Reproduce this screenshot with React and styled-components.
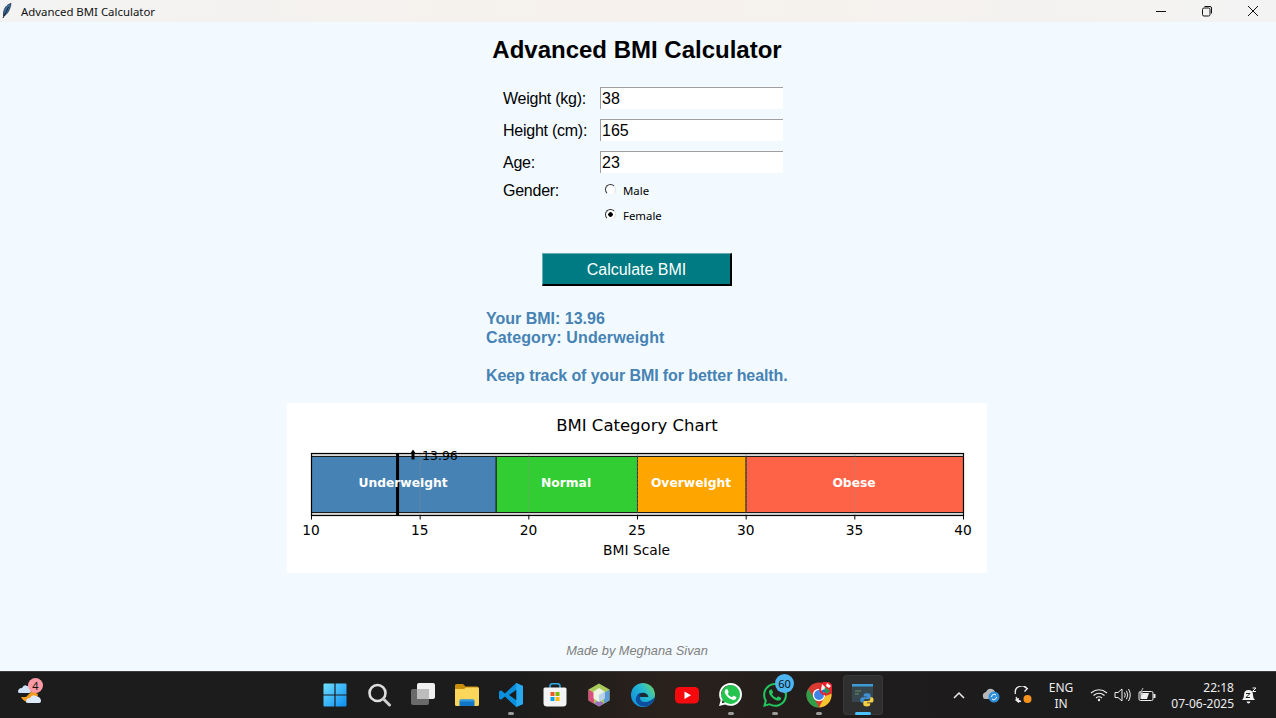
import React from "react"
import styled, { createGlobalStyle } from "styled-components"
import { SiWhatsapp } from "react-icons/si"

const GlobalStyle = createGlobalStyle`
  html, body {
    margin: 0;
    padding: 0;
    overflow: hidden;
    background: #f2faff;
  }
`

const Screen = styled.div`
  width: 1276px;
  height: 718px;
  display: flex;
  flex-direction: column;
  overflow: hidden;
  font-family: "Liberation Sans", Arial, sans-serif;
`

// Title bar

const TitleBar = styled.div`
  height: 22px;
  flex: none;
  display: flex;
  align-items: center;
  padding-left: 2px;
  background: linear-gradient(90deg, #f3f3f3, #f6f1ec 50%, #f3f3f3);
`

const WindowTitle = styled.span`
  margin-left: 9px;
  font: 11.4px "Noto Sans", sans-serif;
  color: #111;
`

const WindowControls = styled.div`
  margin-left: auto;
  display: flex;
  height: 100%;
`

const ControlButton = styled.div`
  width: 46px;
  display: flex;
  align-items: center;
  justify-content: center;
`

// App body

const Main = styled.main`
  flex: 1;
  display: flex;
  flex-direction: column;
  align-items: center;
  padding: 14px 2px 13px 0;
  background: #f2faff;
  min-height: 0;
`

const Heading = styled.h1`
  margin: 0;
  font-size: 24px;
  line-height: 28px;
  font-weight: 700;
  color: #000;
`

const Form = styled.div`
  width: 280px;
  padding-left: 12px;
  margin-top: 23px;
  display: grid;
  grid-template-columns: 97px 183px;
  row-gap: 10px;
`

const FieldLabel = styled.label`
  font-size: 16px;
  line-height: 24px;
  height: 22px;
  letter-spacing: -0.25px;
  color: #000;
  margin-top: ${(p) => p.$shift || 0}px;
`

const TextInput = styled.input`
  box-sizing: border-box;
  width: 183px;
  height: 22px;
  margin: 0;
  padding: 1px 0 0 1px;
  border: 0;
  border-top: 1px solid #a0a0a0;
  border-left: 1px solid #a0a0a0;
  outline: 0;
  background: #fff;
  font: 16px "Liberation Sans", Arial, sans-serif;
  color: #000;
`

const RadioGroup = styled.div`
  display: flex;
  flex-direction: column;
  gap: 5px;
  padding-left: 5px;
  margin-top: -3px;
`

const RadioRow = styled.div`
  height: 20px;
  display: flex;
  align-items: center;
  gap: 7px;
  font: 11.4px "Noto Sans", sans-serif;
  color: #000;
`

const RadioMark = styled.span`
  box-sizing: border-box;
  width: 11px;
  height: 11px;
  margin-top: -2px;
  border-radius: 50%;
  border: 1px solid;
  border-color: #333 #e4e4e4 #f4f4f4 #333;
  background: ${(p) => (p.$checked ? "radial-gradient(circle, #000 0 2px, #fff 2.5px)" : "#fff")};
`

const CalculateButton = styled.button`
  box-sizing: border-box;
  width: 190px;
  height: 33px;
  margin-top: 28px;
  padding: 2px 0 0;
  border: 1px solid;
  border-width: 1px 2px 2px 1px;
  border-color: #5fb0b5 #000 #000 #5fb0b5;
  background: #007b83;
  color: #fff;
  font: 16px "Liberation Sans", Arial, sans-serif;
`

const Results = styled.div`
  width: 302px;
  margin-top: 23px;
  font-size: 16px;
  line-height: 19px;
  font-weight: 700;
  white-space: nowrap;
  color: #4682b4;
`

const ResultLine = styled.div`
  letter-spacing: ${(p) => p.$spacing}px;
`

const ResultGap = styled.div`
  height: 19px;
`

const ChartPanel = styled.section`
  width: 700px;
  height: 170px;
  margin-top: 18px;
  background: #fff;
`

const Credit = styled.footer`
  margin-top: auto;
  font-size: 12.8px;
  line-height: 14px;
  font-style: italic;
  color: #808080;
`

// Taskbar

const Taskbar = styled.footer`
  height: 47px;
  flex: none;
  box-sizing: border-box;
  display: grid;
  grid-template-columns: 313px 572px 1fr;
  align-items: center;
  border-top: 1px solid #3c3c3c;
  background: linear-gradient(90deg, #1c1c1c 40%, #2a211c 52%, #1e1c1c 68%, #1c1c1c);
  color: #ededed;
  font: 12px "Noto Sans", sans-serif;
`

const Widget = styled.div`
  position: relative;
  width: 26px;
  height: 26px;
  margin-left: 16px;
`

const CountBadge = styled.span`
  position: absolute;
  top: ${(p) => p.$top}px;
  left: ${(p) => p.$left}px;
  width: ${(p) => p.$size}px;
  height: ${(p) => p.$size}px;
  border-radius: 50%;
  display: flex;
  align-items: center;
  justify-content: center;
  background: ${(p) => p.$bg};
  color: #111;
  font: 11px "Noto Sans", sans-serif;
`

const TaskIcons = styled.div`
  display: flex;
`

const TaskButton = styled.div`
  position: relative;
  width: ${(p) => (p.$active ? 40 : 44)}px;
  margin: 0 ${(p) => (p.$active ? 2 : 0)}px;
  height: 40px;
  display: flex;
  align-items: center;
  justify-content: center;
  border-radius: 4px;
  background: ${(p) => (p.$active ? "#2f2f2f" : "transparent")};
  box-shadow: ${(p) => (p.$active ? "inset 0 0 0 1px #383838" : "none")};
`

const RunningDot = styled.span`
  position: absolute;
  bottom: 0;
  left: 50%;
  transform: translateX(-50%);
  width: ${(p) => (p.$active ? 16 : 6)}px;
  height: 3px;
  border-radius: 2px;
  background: ${(p) => (p.$active ? "#4cc2ff" : "#9b9b9b")};
`

const Tray = styled.div`
  display: flex;
  justify-content: flex-end;
  align-items: center;
  padding-right: 12px;
`

const TrayItem = styled.div`
  width: ${(p) => p.$width}px;
  display: flex;
  align-items: center;
  justify-content: center;
`

const LangBlock = styled.div`
  width: 44px;
  margin-right: 4px;
  padding-top: 2px;
  text-align: center;
  line-height: 16px;
`

const ClockBlock = styled.div`
  width: 74px;
  padding-top: 2px;
  text-align: right;
  line-height: 16px;
  white-space: nowrap;
`

// Chart drawing

const AxisX = (v) => 24.5 + (v - 10) * 21.733

const categories = [
  { name: "Underweight", from: 10, to: 18.5, color: "#4682b4" },
  { name: "Normal", from: 18.5, to: 25, color: "#32cd32" },
  { name: "Overweight", from: 25, to: 30, color: "#ffa500" },
  { name: "Obese", from: 30, to: 40, color: "#ff6347" },
]

const chartFont = "DejaVu Sans, sans-serif"

const BmiChart = () => (
  <svg width="700" height="170" viewBox="0 0 700 170">
    <text x="350" y="28" textAnchor="middle" fontFamily={chartFont} fontSize="16.5" fill="#000">
      BMI Category Chart
    </text>
    <rect x="24.5" y="50.5" width="652" height="62" fill="#d8d8d8" />
    {categories.map((c) => (
      <rect
        key={c.name}
        x={AxisX(c.from)}
        y="53.5"
        width={AxisX(c.to) - AxisX(c.from)}
        height="56"
        fill={c.color}
        stroke="#1a1a1a"
        strokeWidth="1"
      />
    ))}
    {[15, 20, 25, 30, 35].map((v) => (
      <line
        key={v}
        x1={AxisX(v)}
        x2={AxisX(v)}
        y1="50.5"
        y2="112.5"
        stroke="#909090"
        strokeOpacity="0.5"
        strokeWidth="1"
        strokeDasharray="3 1"
      />
    ))}
    <rect x="24.5" y="50.5" width="652" height="62" fill="none" stroke="#000" strokeWidth="1.2" />
    <rect x={AxisX(13.96) - 1.5} y="50" width="3" height="63" fill="#000" />
    {categories.map((c) => (
      <text
        key={c.name}
        x={(AxisX(c.from) + AxisX(c.to)) / 2 - 0.8}
        y="84"
        textAnchor="middle"
        fontFamily={chartFont}
        fontSize="12.3"
        fontWeight="700"
        fill="#fff"
      >
        {c.name}
      </text>
    ))}
    <path d="M126 46.500 L129 51 H127.500 V56.500 H124.500 V51 H123 Z" fill="#000" />
    <text x="135" y="57" fontFamily={chartFont} fontSize="12.5" fill="#000">
      13.96
    </text>
    {[10, 15, 20, 25, 30, 35, 40].map((v) => (
      <g key={v}>
        <line x1={AxisX(v)} x2={AxisX(v)} y1="112.5" y2="116.5" stroke="#000" strokeWidth="1" />
        <text x={AxisX(v) - 0.4} y="132" textAnchor="middle" fontFamily={chartFont} fontSize="13.8" fill="#000">
          {v}
        </text>
      </g>
    ))}
    <text x="349.6" y="152" textAnchor="middle" fontFamily={chartFont} fontSize="13.8" fill="#000">
      BMI Scale
    </text>
  </svg>
)

// Icons

const FeatherIcon = () => (
  <svg width="10" height="16" viewBox="0 0 10 16">
    <path d="M9 0.5 C5 1.5 2 5 1.5 10 L1.5 13 C5 12 8 7 9 0.5Z" fill="#3f6f9f" stroke="#1b2c44" strokeWidth="0.8" />
    <path d="M6.5 4 L1 15" stroke="#10202f" strokeWidth="1" />
  </svg>
)

const MinimizeIcon = () => (
  <svg width="12" height="12" viewBox="0 0 12 12">
    <path d="M1 6.5H11" stroke="#111" strokeWidth="1" />
  </svg>
)

const RestoreIcon = () => (
  <svg width="12" height="12" viewBox="0 0 12 12">
    <rect x="1.5" y="3" width="7.5" height="8" rx="1.5" fill="none" stroke="#111" />
    <path d="M3.5 1.5 H9 Q10.5 1.5 10.5 3 V8.5" fill="none" stroke="#111" />
  </svg>
)

const CloseIcon = () => (
  <svg width="12" height="12" viewBox="0 0 12 12">
    <path d="M1 1 L11 11 M11 1 L1 11" stroke="#111" strokeWidth="1" />
  </svg>
)

const WeatherIcon = () => (
  <svg width="26" height="26" viewBox="0 0 26 26">
    <path d="M5 15 A9 9 0 0 0 22 12 L16 9 L10 15Z" fill="#f49a1c" />
    <path d="M2 10 Q2 6 6 6 Q8 2 11 4 Q15 4 15 9 Q15 11 12 11 H4 Q2 11 2 10Z" fill="#cfe2f7" />
    <path d="M10 20 Q10 16 14 16 Q16 12 20 14 Q25 15 25 19 Q25 21 22 21 H12 Q10 21 10 20Z" fill="#dbe9f8" />
  </svg>
)

const WindowsIcon = () => (
  <svg width="24" height="24" viewBox="0 0 24 24">
    <defs>
      <linearGradient id="winBlue" x1="0" y1="0" x2="1" y2="1">
        <stop offset="0" stopColor="#6fe0ff" />
        <stop offset="1" stopColor="#0a8cf0" />
      </linearGradient>
    </defs>
    <path d="M0.5 1.5 Q0.5 0.5 1.5 0.5 H11.4 V11.4 H0.5Z M12.6 0.5 H22.5 Q23.5 0.5 23.5 1.5 V11.4 H12.6Z M0.5 12.6 H11.4 V23.5 H1.5 Q0.5 23.5 0.5 22.5Z M12.6 12.6 H23.5 V22.5 Q23.5 23.5 22.5 23.5 H12.6Z" fill="url(#winBlue)" />
  </svg>
)

const SearchIcon = () => (
  <svg width="24" height="24" viewBox="0 0 24 24">
    <circle cx="10.5" cy="10" r="8" fill="none" stroke="#dedede" strokeWidth="2.6" />
    <path d="M16.5 16 L22.5 22" stroke="#cfcfcf" strokeWidth="3" strokeLinecap="round" />
  </svg>
)

const TaskViewIcon = () => (
  <svg width="24" height="24" viewBox="0 0 24 24">
    <rect x="6" y="0" width="18" height="16" rx="2" fill="#f0f0f0" />
    <rect x="0" y="6" width="18" height="16" rx="2" fill="#6a6a6a" />
    <rect x="6" y="6" width="12" height="10" fill="#bdbdbd" />
  </svg>
)

const FolderIcon = () => (
  <svg width="24" height="24" viewBox="0 0 24 24">
    <path d="M0 2.5 Q0 1 1.5 1 H8 L10.5 3.5 H22 Q24 3.5 24 5.5 V10 H0Z" fill="#c98f0c" />
    <path d="M0 6 H9 L11 4.5 H22.5 Q24 4.5 24 6 V21.5 Q24 23 22.5 23 H1.5 Q0 23 0 21.5Z" fill="#fad65a" />
    <path d="M4.5 23 V18.5 Q4.5 16.5 6.5 16.5 H17.5 Q19.5 16.5 19.5 18.5 V23Z" fill="#1176c8" />
    <rect x="4.5" y="16.5" width="15" height="2" rx="1" fill="#2e9be6" />
  </svg>
)

const VsCodeIcon = () => (
  <svg width="24" height="24" viewBox="0 0 24 24">
    <path d="M17.2 0 L24 3 V21 L17.2 24 L6 13.6 L2 16.8 L0 15.6 V8.4 L2 7.2 L6 10.4Z M17.5 6.8 L10 12 L17.5 17.2Z" fill="#0a8fdc" fillRule="evenodd" />
    <path d="M17.2 0 L24 3 V21 L17.2 24Z M17.5 6.8 V17.2 L17.2 17 V7Z" fill="#27a9f0" fillRule="evenodd" />
  </svg>
)

const StoreIcon = () => (
  <svg width="24" height="24" viewBox="0 0 24 24">
    <path d="M7 6 V3 Q7 0.7 9.5 0.7 H14.5 Q17 0.7 17 3 V6" fill="none" stroke="#2aa8e0" strokeWidth="1.6" />
    <path d="M0.5 6 Q0.5 4.5 2 4.5 H22 Q23.5 4.5 23.5 6 V20 Q23.5 23.5 20 23.5 H4 Q0.5 23.5 0.5 20Z" fill="#f4f4f4" />
    <rect x="7.5" y="9" width="4" height="4" fill="#ee5a2c" />
    <rect x="12.5" y="9" width="4" height="4" fill="#7fba00" />
    <rect x="7.5" y="14" width="4" height="4" fill="#00a4ef" />
    <rect x="12.5" y="14" width="4" height="4" fill="#ffb900" />
  </svg>
)

const CubeIcon = () => (
  <svg width="24" height="24" viewBox="0 0 24 24">
    <path d="M12 0.5 L22.5 6.5 V17.5 L12 23.5 L1.5 17.5 V6.5Z" fill="#a9c95a" />
    <path d="M1.5 6.5 L7 10 V20.6 L1.5 17.5Z" fill="#d94f7d" />
    <path d="M7 20.6 L12 23.5 L17 20.6 L12 17Z" fill="#9c6fbf" />
    <path d="M22.5 6.5 V17.5 L17 20.6 V10Z" fill="#5d9bd8" />
    <path d="M12 5 L17.5 8.5 V15.5 L12 19 L6.5 15.5 V8.5Z" fill="#eef3e6" />
    <path d="M12 12 L17.5 8.5 V15.5 L12 19Z" fill="#b8d3ea" />
  </svg>
)

const EdgeIcon = () => (
  <svg width="24" height="24" viewBox="0 0 24 24">
    <defs>
      <linearGradient id="edgeBody" x1="0" y1="0.8" x2="1" y2="0.1">
        <stop offset="0" stopColor="#0f8fdc" />
        <stop offset="0.6" stopColor="#28bcd0" />
        <stop offset="1" stopColor="#6fd65a" />
      </linearGradient>
    </defs>
    <circle cx="12" cy="12" r="12" fill="url(#edgeBody)" />
    <path d="M24 14 Q23 20 17 23 Q10 25 6 20 Q3 15 7 11 Q10 9 14 10.5 Q9 11 9 15 Q9 19 14 19 Q19 19 24 14Z" fill="#0d4f9e" />
    <path d="M8 13 Q10 9 14 10 Q17 11 17.5 14 H10 Q9 14 8 13Z" fill="#1c2b33" />
  </svg>
)

const YouTubeIcon = () => (
  <svg width="24" height="24" viewBox="0 0 24 24">
    <rect x="0" y="4" width="24" height="16.5" rx="4.5" fill="#f60a0e" />
    <path d="M9.5 8.4 L16 12.2 L9.5 16Z" fill="#fff" />
  </svg>
)

const WhatsAppIcon = () => (
  <svg width="24" height="24" viewBox="0 0 24 24">
    <circle cx="12" cy="12" r="10" fill="#25c44f" />
    <SiWhatsapp size={23} color="#fff" />
  </svg>
)

const WhatsAppBusinessIcon = () => <SiWhatsapp size={24} color="#22c55e" />

const ChromeIcon = () => (
  <svg width="26" height="26" viewBox="0 0 26 26">
    <circle cx="13" cy="13" r="12.5" fill="#d93a31" />
    <path d="M2.2 6.7 L8 16 L13 25.5 A12.5 12.5 0 0 1 2.2 6.7Z" fill="#2f9e48" />
    <path d="M13 25.5 L18 16 L24.5 8 A12.5 12.5 0 0 1 13 25.5Z" fill="#f2c52e" />
    <circle cx="13" cy="13" r="6.2" fill="#fff" />
    <circle cx="13" cy="13" r="4.9" fill="#3f82e8" />
    <circle cx="20" cy="6.5" r="7" fill="#e8232d" />
    <path d="M16 2 L20 6 L18 11 L15 8Z" fill="#f4f4f4" />
    <path d="M19 5 L24 9 L21 12 L18 9Z" fill="#1f9d55" />
    <path d="M21 1 L25 4 L23 6 L20 4Z" fill="#fff" />
    <circle cx="17.5" cy="9" r="1.6" fill="#2468c9" />
  </svg>
)

const PythonAppIcon = () => (
  <svg width="26" height="26" viewBox="0 0 26 26">
    <rect x="2" y="2" width="21" height="18" fill="#37474f" />
    <rect x="2" y="2" width="21" height="2.5" fill="#3e9bd8" />
    <path d="M5 9H11M5 12H9" stroke="#6f8f5f" strokeWidth="1" />
    <g transform="translate(9 10) scale(0.66)">
      <path d="M12 2 C9 2 7 3 7 5 V7 H12 V8 H5 C3 8 2 9.500 2 12 S3 16 5 16 H7 V13.500 C7 11.500 8.500 10.500 10 10.500 H15 C16.500 10.500 17.500 9.500 17.500 8 V5 C17.500 3 15 2 12 2Z" fill="#3f8fd2" />
      <path d="M12 2 C9 2 7 3 7 5 V7 H12 V8 H5 C3 8 2 9.500 2 12 S3 16 5 16 H7 V13.500 C7 11.500 8.500 10.500 10 10.500 H15 C16.500 10.500 17.500 9.500 17.500 8 V5 C17.500 3 15 2 12 2Z" fill="#f7cf45" transform="rotate(180 12 12)" />
    </g>
  </svg>
)

const ChevronIcon = () => (
  <svg width="14" height="10" viewBox="0 0 14 10">
    <path d="M2 8 L7 3 L12 8" fill="none" stroke="#eee" strokeWidth="1.5" />
  </svg>
)

const OneDriveIcon = () => (
  <svg width="18" height="16" viewBox="0 0 18 16">
    <path d="M1 10 Q0 6 4 5 Q6 1 10 2 Q13 3 13 6 Q8 7 8 12 H3 Q1 12 1 10Z" fill="#b8b8b8" />
    <circle cx="12" cy="10" r="5.5" fill="#2f8fd8" />
    <path d="M9.5 10 A2.7 2.7 0 0 1 14 8 M14.500 10 A2.700 2.700 0 0 1 10 12" fill="none" stroke="#fff" strokeWidth="1" />
  </svg>
)

const SyncIcon = () => (
  <svg width="18" height="18" viewBox="0 0 18 18">
    <path d="M1.500 8 A6.500 6.500 0 0 1 13 2.500 M10 0.500 L13.300 2.700 L10.500 5.500" fill="none" stroke="#f0f0f0" strokeWidth="1.300" />
    <path d="M2 11 A6.500 6.500 0 0 0 7 15.500 M5 12.700 L2 14 L5 16.500" fill="none" stroke="#f0f0f0" strokeWidth="1.300" />
    <circle cx="13.500" cy="13" r="4" fill="#f7931e" />
  </svg>
)

const WifiIcon = () => (
  <svg width="18" height="14" viewBox="0 0 18 14">
    <path d="M1 5 Q9 -1.500 17 5 M3.500 7.500 Q9 3 14.500 7.500 M6 10 Q9 7.500 12 10" fill="none" stroke="#eee" strokeWidth="1.200" />
    <circle cx="9" cy="12" r="1.200" fill="#eee" />
  </svg>
)

const VolumeIcon = () => (
  <svg width="18" height="16" viewBox="0 0 18 16">
    <path d="M1 5.500 H4 L8 2 V14 L4 10.500 H1Z" fill="none" stroke="#eee" strokeWidth="1" />
    <path d="M10.500 5.500 Q12 8 10.500 10.500 M12.500 3.800 Q15 8 12.500 12.200 M14.500 2 Q18 8 14.500 14" fill="none" stroke="#eee" strokeWidth="1" />
  </svg>
)

const BatteryIcon = () => (
  <svg width="18" height="14" viewBox="0 0 18 14">
    <rect x="1" y="3.500" width="14" height="9" rx="1.500" fill="none" stroke="#eee" strokeWidth="1" />
    <rect x="15.500" y="6" width="2" height="4" fill="#eee" />
    <path d="M2.500 5 H11 L9 11 H2.500Z" fill="#eee" />
    <path d="M5 0 L2.500 5 H5 L3.500 8" fill="#1c1c1c" stroke="#eee" strokeWidth="0.800" />
  </svg>
)

const BellIcon = () => (
  <svg width="16" height="17" viewBox="0 0 16 17">
    <path d="M1 13 Q3 11.500 3 8 Q3 3 7.500 3 Q12 3 12 8 Q12 11.500 14 13Z" fill="#f2f2f2" />
    <path d="M5.500 14.500 H9.500 Q9 16.500 7.500 16.500 Q6 16.500 5.500 14.500Z" fill="#f2f2f2" />
    <path d="M5 6.500 H9 L5 10.500 H9" fill="none" stroke="#222" strokeWidth="1" />
    <path d="M11.500 1 H15 L11.500 4.500 H15" fill="none" stroke="#f2f2f2" strokeWidth="1" />
  </svg>
)

const taskApps = [
  { id: "start", icon: <WindowsIcon /> },
  { id: "search", icon: <SearchIcon /> },
  { id: "taskview", icon: <TaskViewIcon /> },
  { id: "files", icon: <FolderIcon /> },
  { id: "vscode", icon: <VsCodeIcon />, running: true },
  { id: "store", icon: <StoreIcon /> },
  { id: "cube", icon: <CubeIcon /> },
  { id: "edge", icon: <EdgeIcon /> },
  { id: "youtube", icon: <YouTubeIcon /> },
  { id: "whatsapp", icon: <WhatsAppIcon />, running: true },
  { id: "whatsapp-b", icon: <WhatsAppBusinessIcon />, running: true, badge: "60" },
  { id: "chrome", icon: <ChromeIcon />, running: true },
  { id: "python", icon: <PythonAppIcon />, running: true, active: true },
]

const App = () => {
  return (
    <Screen>
      <GlobalStyle />
      <TitleBar>
        <FeatherIcon />
        <WindowTitle>Advanced BMI Calculator</WindowTitle>
        <WindowControls>
          <ControlButton><MinimizeIcon /></ControlButton>
          <ControlButton><RestoreIcon /></ControlButton>
          <ControlButton><CloseIcon /></ControlButton>
        </WindowControls>
      </TitleBar>

      <Main>
        <Heading>Advanced BMI Calculator</Heading>
        <Form>
          <FieldLabel>Weight (kg):</FieldLabel>
          <TextInput readOnly value="38" />
          <FieldLabel>Height (cm):</FieldLabel>
          <TextInput readOnly value="165" />
          <FieldLabel>Age:</FieldLabel>
          <TextInput readOnly value="23" />
          <FieldLabel $shift={-4}>Gender:</FieldLabel>
          <RadioGroup>
            <RadioRow><RadioMark />Male</RadioRow>
            <RadioRow><RadioMark $checked />Female</RadioRow>
          </RadioGroup>
        </Form>
        <CalculateButton>Calculate BMI</CalculateButton>
        <Results>
          <ResultLine $spacing={0}>Your BMI: 13.96</ResultLine>
          <ResultLine $spacing={0.12}>Category: Underweight</ResultLine>
          <ResultGap />
          <ResultLine $spacing={-0.08}>Keep track of your BMI for better health.</ResultLine>
        </Results>
        <ChartPanel>
          <BmiChart />
        </ChartPanel>
        <Credit>Made by Meghana Sivan</Credit>
      </Main>

      <Taskbar>
        <Widget>
          <WeatherIcon />
          <CountBadge $top={-4} $left={12} $size={15} $bg="#ff9aa5">4</CountBadge>
        </Widget>
        <TaskIcons>
          {taskApps.map((app) => (
            <TaskButton key={app.id} $active={app.active}>
              {app.icon}
              {app.badge && (
                <CountBadge $top={-1} $left={22} $size={19} $bg="#4db5f0">{app.badge}</CountBadge>
              )}
              {app.running && <RunningDot $active={app.active} />}
            </TaskButton>
          ))}
        </TaskIcons>
        <Tray>
          <TrayItem $width={32}><ChevronIcon /></TrayItem>
          <TrayItem $width={32}><OneDriveIcon /></TrayItem>
          <TrayItem $width={32}><SyncIcon /></TrayItem>
          <LangBlock>ENG<br />IN</LangBlock>
          <TrayItem $width={24}><WifiIcon /></TrayItem>
          <TrayItem $width={23}><VolumeIcon /></TrayItem>
          <TrayItem $width={26}><BatteryIcon /></TrayItem>
          <ClockBlock>22:18<br />07-06-2025</ClockBlock>
          <TrayItem $width={30}><BellIcon /></TrayItem>
        </Tray>
      </Taskbar>
    </Screen>
  )
}

export default App
